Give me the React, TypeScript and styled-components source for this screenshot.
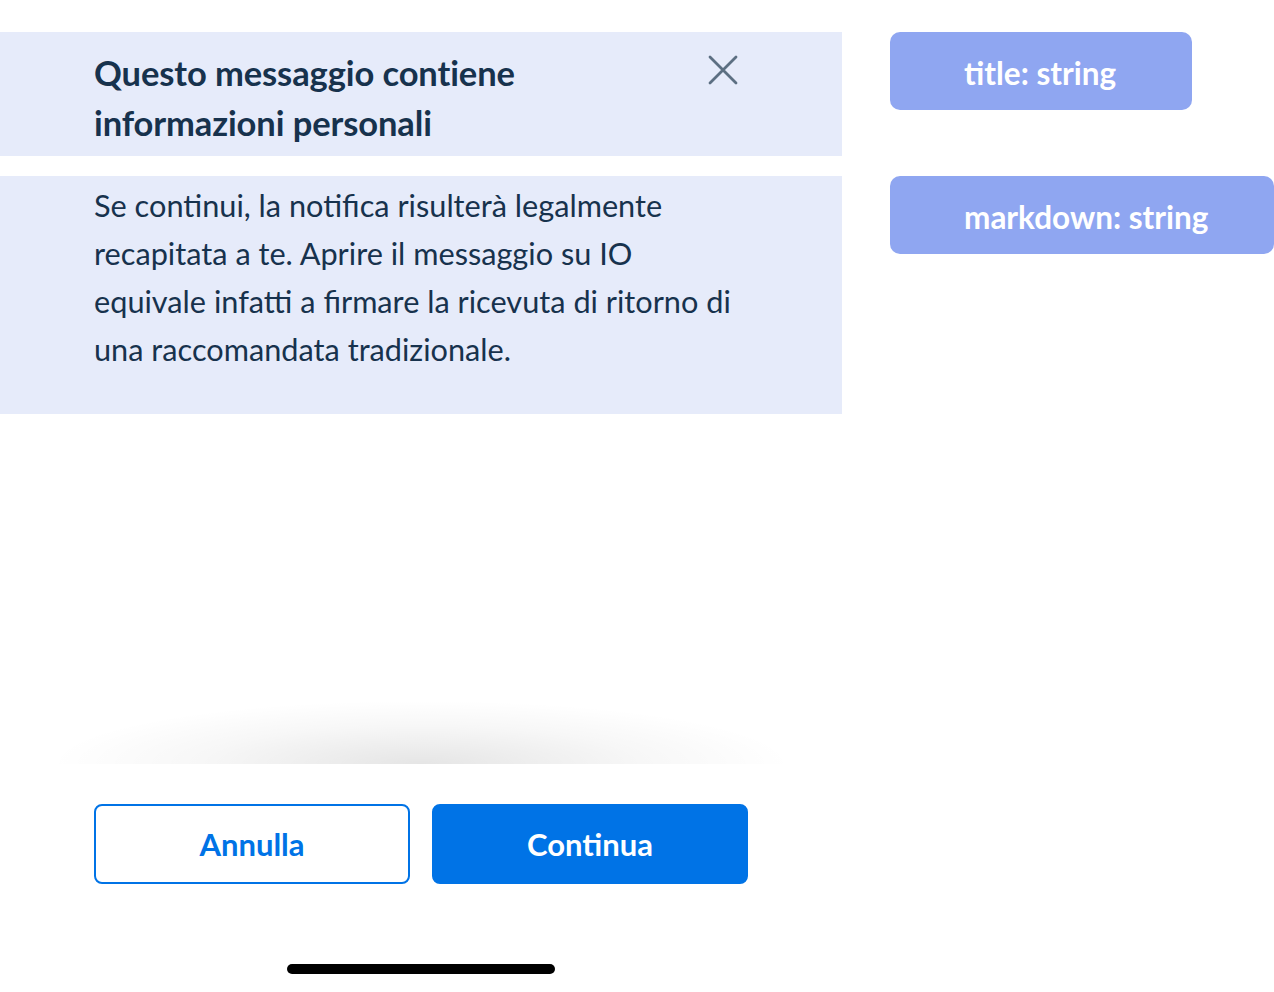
import React from "react";
import styled, { createGlobalStyle } from "styled-components";

const GlobalStyle = createGlobalStyle`
  html, body {
    margin: 0;
    padding: 0;
    background: #ffffff;
  }
  body {
    font-family: Lato, "Liberation Sans", sans-serif;
  }
`;

const App: React.FC = () => {
  return (
    <>
      <GlobalStyle />
      <Page>
        <Screen>
          <Header>
            <Title>
              Questo messaggio contiene
              <br />
              informazioni personali
            </Title>
            <CloseButton aria-label="Chiudi">
              <svg width="30" height="30" viewBox="0 0 30 30">
                <path
                  d="M2 2 L28 28 M28 2 L2 28"
                  stroke="#5c6f82"
                  strokeWidth="2.8"
                  strokeLinecap="round"
                />
              </svg>
            </CloseButton>
          </Header>

          <Body>
            <Text>
              Se continui, la notifica risulterà legalmente recapitata a te.
              Aprire il messaggio su IO equivale infatti a firmare la ricevuta
              di ritorno di una raccomandata tradizionale.
            </Text>
          </Body>

          <Spacer />

          <Footer>
            <ButtonRow>
              <Button variant="outline">Annulla</Button>
              <Button variant="solid">Continua</Button>
            </ButtonRow>
            <HomeIndicator />
          </Footer>
        </Screen>

        <Props>
          <Tag>title: string</Tag>
          <Tag wide>markdown: string</Tag>
        </Props>
      </Page>
    </>
  );
};

export default App;

const Page = styled.div`
  display: flex;
  width: 1274px;
  height: 992px;
  overflow: hidden;
`;

const Screen = styled.div`
  width: 842px;
  flex-shrink: 0;
  display: flex;
  flex-direction: column;
  padding-top: 32px;
  box-sizing: border-box;
`;

const Header = styled.div`
  background: #e6ebfa;
  height: 124px;
  box-sizing: border-box;
  padding: 16px 94px 0 94px;
  display: flex;
  justify-content: space-between;
  align-items: flex-start;
`;

const Title = styled.h1`
  margin: 0;
  font-size: 34.5px;
  font-weight: 700;
  line-height: 50px;
  color: #17324d;
  letter-spacing: -0.1px;
`;

const CloseButton = styled.button`
  border: none;
  background: transparent;
  padding: 0;
  margin-top: 7px;
  margin-right: 10px;
  width: 30px;
  height: 30px;
  cursor: pointer;
`;

const Body = styled.div`
  margin-top: 20px;
  background: #e6ebfa;
  height: 238px;
  box-sizing: border-box;
  padding: 6px 94px 0 94px;
`;

const Text = styled.p`
  margin: 0;
  font-size: 30.7px;
  line-height: 48px;
  color: #17324d;
  max-width: 650px;
`;

const Spacer = styled.div`
  flex: 1;
`;

const Footer = styled.div`
  position: relative;
  height: 228px;
  box-sizing: border-box;
  padding-top: 40px;
  display: flex;
  flex-direction: column;
  align-items: center;

  &::before {
    content: "";
    position: absolute;
    left: 50px;
    right: 50px;
    top: -64px;
    height: 64px;
    background: radial-gradient(
      ellipse 50% 100% at 50% 100%,
      rgba(0, 0, 0, 0.1),
      rgba(0, 0, 0, 0.03) 60%,
      rgba(0, 0, 0, 0) 100%
    );
  }
`;

const ButtonRow = styled.div`
  display: flex;
  gap: 22px;
`;

const Button = styled.button<{ variant: "outline" | "solid" }>`
  width: 316px;
  height: 80px;
  box-sizing: border-box;
  border-radius: 8px;
  border: 2px solid #0073e6;
  background: ${({ variant }) => (variant === "solid" ? "#0073e6" : "#ffffff")};
  color: ${({ variant }) => (variant === "solid" ? "#ffffff" : "#0073e6")};
  font-family: Lato, "Liberation Sans", sans-serif;
  font-size: 31px;
  font-weight: 700;
  cursor: pointer;
`;

const HomeIndicator = styled.div`
  margin-top: 80px;
  width: 268px;
  height: 10px;
  border-radius: 5px;
  background: #000000;
`;

const Props = styled.div`
  display: flex;
  flex-direction: column;
  gap: 66px;
  padding-top: 32px;
  margin-left: 48px;
  align-items: flex-start;
`;

const Tag = styled.div<{ wide?: boolean }>`
  width: ${({ wide }) => (wide ? "384px" : "302px")};
  height: 78px;
  box-sizing: border-box;
  padding-left: 74px;
  padding-top: 3px;
  display: flex;
  align-items: center;
  background: #8fa6f1;
  border-radius: 10px;
  color: #ffffff;
  font-size: 31.5px;
  font-weight: 700;
`;
